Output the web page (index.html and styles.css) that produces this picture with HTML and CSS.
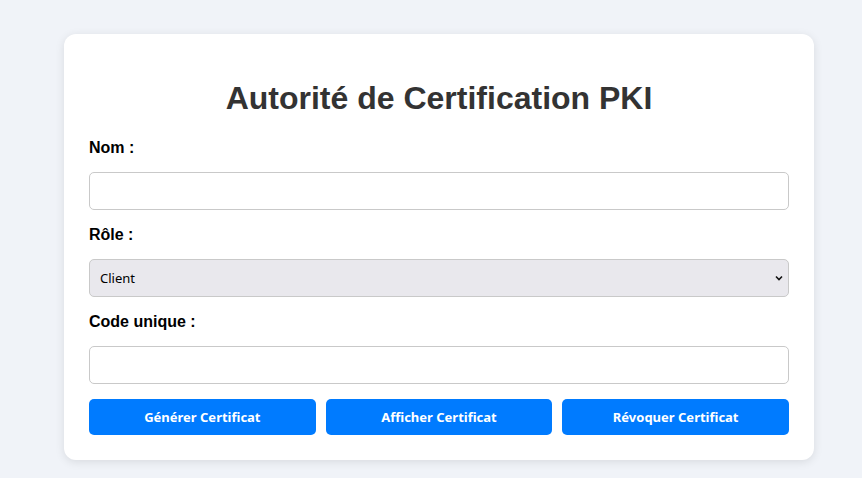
FILE: index.html
```html
<!DOCTYPE html>
<html lang="fr">
<head>
<meta charset="utf-8">
<title>Autorité de Certification PKI</title>
<link rel="stylesheet" href="styles.css">
</head>
<body>
<div class="card">
  <h1 class="title">Autorité de Certification PKI</h1>
  <label class="label" for="nom">Nom :</label>
  <input class="field" id="nom" type="text">
  <label class="label" for="role">Rôle :</label>
  <div class="select-wrap">
    <select class="field select" id="role">
      <option>Client</option>
    </select>
    <svg class="chev" width="8" height="6" viewBox="0 0 8 6"><path d="M1 1.5 L4 4.5 L7 1.5" fill="none" stroke="#111" stroke-width="1.6"/></svg>
  </div>
  <label class="label" for="code">Code unique :</label>
  <input class="field" id="code" type="text">
  <div class="buttons">
    <button class="btn">Générer Certificat</button>
    <button class="btn">Afficher Certificat</button>
    <button class="btn">Révoquer Certificat</button>
  </div>
</div>
</body>
</html>
```
FILE: styles.css
```css
* { box-sizing: border-box; }
html, body { margin: 0; }
body {
  background: #f0f3f8;
  font-family: "Liberation Sans", Arial, sans-serif;
  padding: 34px 48px 18px 64px;
}
.card {
  width: 750px;
  background: #fff;
  border-radius: 12px;
  box-shadow: 0 2px 10px rgba(0,0,0,0.1);
  padding: 25px;
  display: flex;
  flex-direction: column;
}
.title {
  margin: 21px 0 21px;
  text-align: center;
  font-size: 32px;
  line-height: 37px;
  font-weight: bold;
  color: #333;
}
.label {
  display: block;
  font-size: 16px;
  line-height: 18px;
  font-weight: bold;
  color: #000;
  margin: 1px 0 15px;
}
.field {
  display: block;
  width: 100%;
  height: 38px;
  border: 1px solid #c9c9c9;
  border-radius: 5px;
  padding: 0 10px;
  margin: 0 0 15px;
  font-size: 13px;
  background: #fff;
}
.select-wrap { position: relative; }
.select {
  appearance: none;
  -webkit-appearance: none;
  background: #e9e8ed;
  font-family: "Noto Sans", "Open Sans", sans-serif;
  color: #000;
}
.chev {
  position: absolute;
  right: 6px;
  top: 16px;
}
.buttons {
  display: flex;
  gap: 10px;
}
.btn {
  flex: 1;
  height: 36px;
  border: none;
  border-radius: 5px;
  background: #007bff;
  color: #fff;
  font-family: "Noto Sans", "Open Sans", sans-serif;
  font-weight: bold;
  font-size: 13px;
}
```
